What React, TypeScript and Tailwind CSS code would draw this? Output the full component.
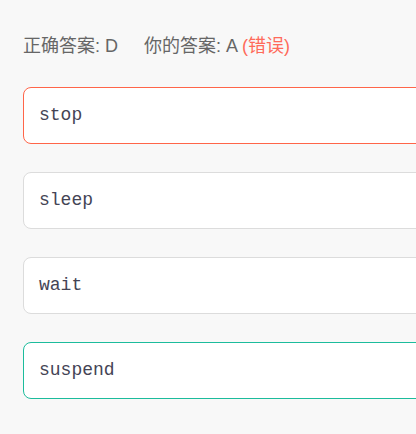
import React from "react";

const options = [
  { text: "stop", border: "border-[#ff6549]" },
  { text: "sleep", border: "border-[#dcdcdc]" },
  { text: "wait", border: "border-[#dcdcdc]" },
  { text: "suspend", border: "border-[#1cbc9c]" },
];

export default function App() {
  return (
    <div className="w-[416px] h-[434px] bg-[#f8f8f8] overflow-hidden pl-[23px] pt-[33px] [font-family:'Liberation_Sans','Noto_Sans_CJK_SC',sans-serif]">
      <div className="flex text-[18px] leading-[26px] text-[#666] whitespace-pre">
        <span>正确答案: D</span>
        <span className="ml-[26px]">
          你的答案: A <span className="text-[#ff6a5a]">(错误)</span>
        </span>
      </div>
      <div className="mt-[28px] flex flex-col gap-[28px] w-[420px]">
        {options.map((o) => (
          <div
            key={o.text}
            className={`h-[57px] bg-white border rounded-[8px] ${o.border} flex items-center pl-[15px] text-[18px] text-[#444455] [font-family:'Liberation_Mono',monospace]`}
          >
            {o.text}
          </div>
        ))}
      </div>
    </div>
  );
}
